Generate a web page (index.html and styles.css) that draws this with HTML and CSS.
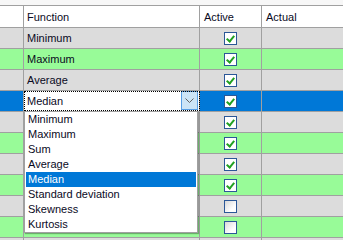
FILE: index.html
```html
<!DOCTYPE html>
<html lang="en">
  <head>
    <meta charset="UTF-8" />
    <title>Functions</title>
    <link rel="stylesheet" href="styles.css">
  </head>
  <body>
    <div class="grid">
      <div class="row head">
        <div class="cell c0"></div>
        <div class="cell c1">Function</div>
        <div class="cell c2 left">Active</div>
        <div class="cell c3">Actual</div>
      </div>
      <div class="row gray">
        <div class="cell c0"></div>
        <div class="cell c1">Minimum</div>
        <div class="cell c2"><span class="box on"></span></div>
        <div class="cell c3"></div>
      </div>
      <div class="row green">
        <div class="cell c0"></div>
        <div class="cell c1">Maximum</div>
        <div class="cell c2"><span class="box on"></span></div>
        <div class="cell c3"></div>
      </div>
      <div class="row gray">
        <div class="cell c0"></div>
        <div class="cell c1">Average</div>
        <div class="cell c2"><span class="box on"></span></div>
        <div class="cell c3"></div>
      </div>
      <div class="row green sel">
        <div class="cell c0"></div>
        <div class="cell c1 edit">
          <span class="value">Median</span>
          <span class="drop-btn">
            <svg width="9" height="5" viewBox="0 0 9 5"><polyline points="0.5,0.5 4.5,4.5 8.5,0.5" fill="none" stroke="#606060" stroke-width="1"/></svg>
          </span>
        </div>
        <div class="cell c2"><span class="box on"></span></div>
        <div class="cell c3"></div>
      </div>
      <div class="row gray">
        <div class="cell c0"></div>
        <div class="cell c1"></div>
        <div class="cell c2"><span class="box on"></span></div>
        <div class="cell c3"></div>
      </div>
      <div class="row green">
        <div class="cell c0"></div>
        <div class="cell c1"></div>
        <div class="cell c2"><span class="box on"></span></div>
        <div class="cell c3"></div>
      </div>
      <div class="row gray">
        <div class="cell c0"></div>
        <div class="cell c1"></div>
        <div class="cell c2"><span class="box on"></span></div>
        <div class="cell c3"></div>
      </div>
      <div class="row green">
        <div class="cell c0"></div>
        <div class="cell c1"></div>
        <div class="cell c2"><span class="box on"></span></div>
        <div class="cell c3"></div>
      </div>
      <div class="row gray">
        <div class="cell c0"></div>
        <div class="cell c1"></div>
        <div class="cell c2"><span class="box"></span></div>
        <div class="cell c3"></div>
      </div>
      <div class="row green">
        <div class="cell c0"></div>
        <div class="cell c1"></div>
        <div class="cell c2"><span class="box"></span></div>
        <div class="cell c3"></div>
      </div>
      <div class="row gray last">
        <div class="cell c0"></div>
        <div class="cell c1"></div>
        <div class="cell c2"></div>
        <div class="cell c3"></div>
      </div>

      <!-- liste déroulante ouverte -->
      <ul class="list">
        <li>Minimum</li>
        <li>Maximum</li>
        <li>Sum</li>
        <li>Average</li>
        <li class="hl">Median</li>
        <li>Standard deviation</li>
        <li>Skewness</li>
        <li>Kurtosis</li>
      </ul>
    </div>
  </body>
</html>
```

FILE: styles.css
```css
body {
  margin: 0;
  padding-top: 5px;
  width: 343px;
  height: 240px;
  box-sizing: border-box;
  overflow: hidden;
  background-color: #f7f7f7;
  font-family: "Liberation Sans", Arial, sans-serif;
  font-size: 11px;
  color: #0a0a1e;
}
.grid {
  position: relative;
  border-top: 1px solid #a0a0a0;
  background-color: #fff;
}
.row {
  display: flex;
  height: 21px;
  box-sizing: border-box;
  border-bottom: 1px solid #a0a0a0;
}
.row.head {
  height: 22px;
  background-color: #fff;
}
.row.last {
  height: 2px;
  border-bottom: none;
}
.gray {
  background-color: #dcdcdc;
}
.green {
  background-color: #98fb98;
}
.cell {
  box-sizing: border-box;
  display: flex;
  align-items: center;
  border-right: 1px solid #a0a0a0;
  padding-left: 3px;
}
.c0 {
  width: 24px;
}
.c1 {
  width: 176px;
}
.c2 {
  width: 62px;
  justify-content: center;
  padding-left: 0;
}
.c2.left {
  justify-content: flex-start;
  padding-left: 4px;
}
.c3 {
  flex: 1;
  border-right: none;
  padding-left: 4px;
}
.sel .c0,
.sel .c2,
.sel .c3 {
  background-color: #0078d7;
}
.edit {
  background-color: #fff;
  outline: 1px dotted #000;
  outline-offset: -1px;
  justify-content: space-between;
}
.drop-btn {
  box-sizing: border-box;
  width: 17px;
  height: 19px;
  margin: 0 1px 1px 0;
  align-self: flex-start;
  display: flex;
  align-items: center;
  justify-content: center;
  background-color: #cce4f7;
  border: 1px solid #569de5;
}
.box {
  box-sizing: border-box;
  width: 13px;
  height: 13px;
  margin-top: 1px;
  border: 1px solid #2b5797;
  background: linear-gradient(135deg, #d8d8d8, #fff 70%);
  position: relative;
}
.box.on {
  background: #fff;
}
.box.on::after {
  content: "";
  position: absolute;
  left: 3px;
  top: 1px;
  width: 3px;
  height: 6px;
  border-right: 2px solid #21a121;
  border-bottom: 2px solid #21a121;
  transform: rotate(40deg);
}
.list {
  position: absolute;
  left: 24px;
  top: 105px;
  width: 174px;
  margin: 0;
  padding: 0 1px;
  list-style: none;
  box-sizing: border-box;
  background-color: #fff;
  border: 1px solid #a0a0a0;
  box-shadow: 1px 1px 1px rgba(0, 0, 0, 0.3);
}
.list li {
  height: 15px;
  line-height: 15px;
  padding-left: 2px;
}
.list li.hl {
  background-color: #0078d7;
  color: #fff;
}
```
